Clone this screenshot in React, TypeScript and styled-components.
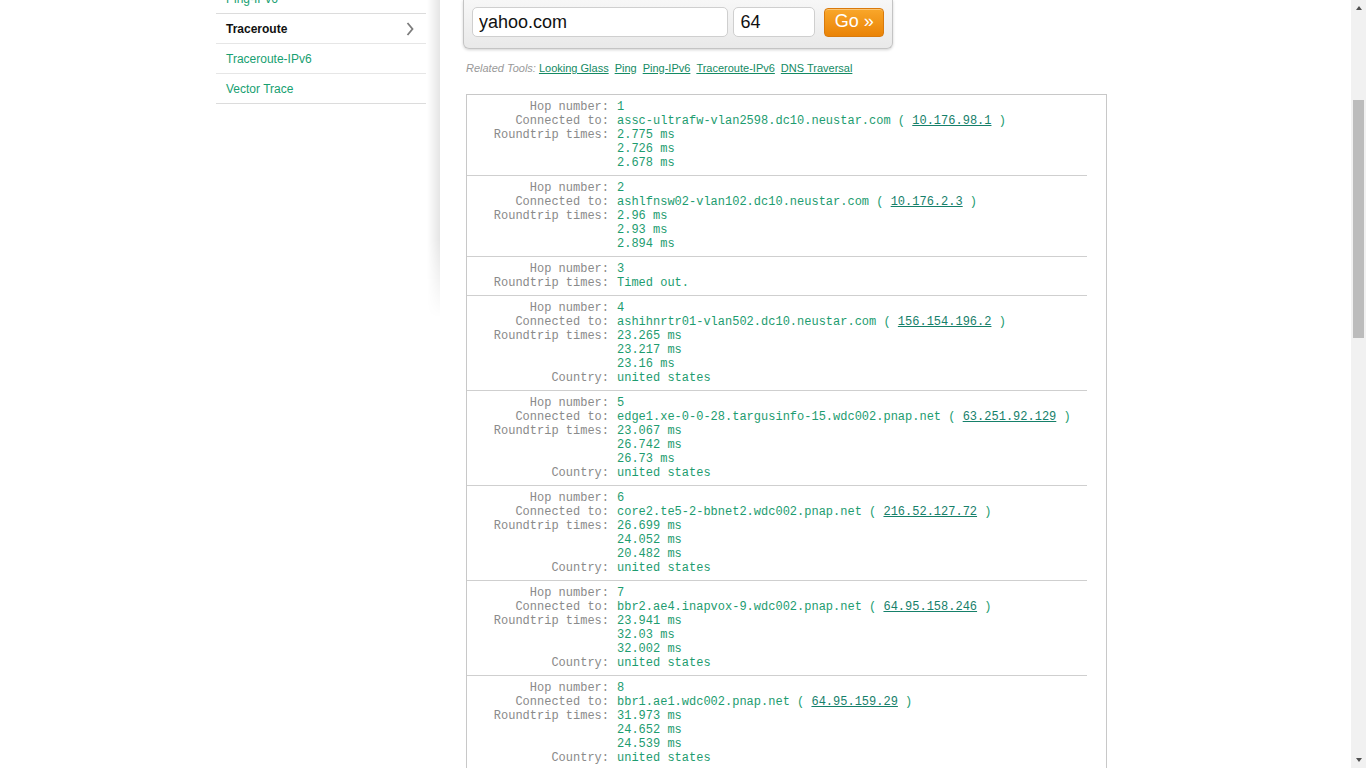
import { useLayoutEffect, useRef } from "react";
import styled, { createGlobalStyle } from "styled-components";

type Hop = {
  hop: number;
  host?: string;
  ip?: string;
  times: string[];
  country?: string;
};

const hops: Hop[] = [
  { hop: 1, host: "assc-ultrafw-vlan2598.dc10.neustar.com", ip: "10.176.98.1", times: ["2.775 ms", "2.726 ms", "2.678 ms"] },
  { hop: 2, host: "ashlfnsw02-vlan102.dc10.neustar.com", ip: "10.176.2.3", times: ["2.96 ms", "2.93 ms", "2.894 ms"] },
  { hop: 3, times: ["Timed out."] },
  { hop: 4, host: "ashihnrtr01-vlan502.dc10.neustar.com", ip: "156.154.196.2", times: ["23.265 ms", "23.217 ms", "23.16 ms"], country: "united states" },
  { hop: 5, host: "edge1.xe-0-0-28.targusinfo-15.wdc002.pnap.net", ip: "63.251.92.129", times: ["23.067 ms", "26.742 ms", "26.73 ms"], country: "united states" },
  { hop: 6, host: "core2.te5-2-bbnet2.wdc002.pnap.net", ip: "216.52.127.72", times: ["26.699 ms", "24.052 ms", "20.482 ms"], country: "united states" },
  { hop: 7, host: "bbr2.ae4.inapvox-9.wdc002.pnap.net", ip: "64.95.158.246", times: ["23.941 ms", "32.03 ms", "32.002 ms"], country: "united states" },
  { hop: 8, host: "bbr1.ae1.wdc002.pnap.net", ip: "64.95.159.29", times: ["31.973 ms", "24.652 ms", "24.539 ms"], country: "united states" },
];

const tools = ["Looking Glass", "Ping", "Ping-IPv6", "Traceroute", "Traceroute-IPv6", "Vector Trace"];
const related = ["Looking Glass", "Ping", "Ping-IPv6", "Traceroute-IPv6", "DNS Traversal"];

const App = () => {
  const scrollRef = useRef<HTMLDivElement>(null);

  useLayoutEffect(() => {
    if (scrollRef.current) scrollRef.current.scrollTop = 274;
  }, []);

  return (
    <>
      <GlobalStyle />
      <StWindow>
        <StScroller ref={scrollRef}>
          <StPage>
            <StHeader>
              <StBrand>UltraTools</StBrand>
              <StPageTitle>Traceroute</StPageTitle>
            </StHeader>
            <StBody>
              <StSide>
                <StMenu>
                  {tools.map((t) => (
                    <StMenuItem key={t} $active={t === "Traceroute"}>
                      {t}
                      {t === "Traceroute" && (
                        <svg width="8" height="14" viewBox="0 0 8 14">
                          <path d="M1.5 1 L6.5 7 L1.5 13" fill="none" stroke="#7c7c7c" strokeWidth="1.8" />
                        </svg>
                      )}
                    </StMenuItem>
                  ))}
                </StMenu>
              </StSide>
              <StMain>
                <StForm>
                  <StHostInput defaultValue="yahoo.com" />
                  <StHopInput defaultValue="64" />
                  <StGoBtn type="button">Go »</StGoBtn>
                </StForm>
                <StRelated>
                  <StRelatedLabel>Related Tools:</StRelatedLabel>
                  {related.map((r) => (
                    <StRelatedLink key={r} href="#">
                      {r}
                    </StRelatedLink>
                  ))}
                </StRelated>
                <StResults>
                  {hops.map((h) => (
                    <StHop key={h.hop}>
                      <StLabel>Hop number:</StLabel>
                      <StValue>{h.hop}</StValue>
                      {h.host && (
                        <>
                          <StLabel>Connected to:</StLabel>
                          <StValue>
                            {h.host} ( <StIpLink href="#">{h.ip}</StIpLink> )
                          </StValue>
                        </>
                      )}
                      <StLabel>Roundtrip times:</StLabel>
                      <StValue>
                        {h.times.map((t, i) => (
                          <div key={i}>{t}</div>
                        ))}
                      </StValue>
                      {h.country && (
                        <>
                          <StLabel>Country:</StLabel>
                          <StValue>{h.country}</StValue>
                        </>
                      )}
                    </StHop>
                  ))}
                </StResults>
              </StMain>
            </StBody>
          </StPage>
        </StScroller>
        <StScrollbar>
          <StArrow $dir="up" />
          <StTrack>
            <StThumb />
          </StTrack>
          <StArrow $dir="down" />
        </StScrollbar>
      </StWindow>
    </>
  );
};

export default App;

const GlobalStyle = createGlobalStyle`
  html, body {
    margin: 0;
    padding: 0;
    overflow: hidden;
    background: #fff;
    font-family: "Liberation Sans", Arial, sans-serif;
  }
`;

const StWindow = styled.div`
  display: flex;
  height: 100vh;
`;

const StScroller = styled.div`
  flex: 1;
  overflow-y: scroll;
  overflow-x: hidden;
  scrollbar-width: none;

  &::-webkit-scrollbar {
    display: none;
  }
`;

const StScrollbar = styled.div`
  display: flex;
  flex-direction: column;
  width: 15px;
  background: #f1f1f1;
`;

const StArrow = styled.div<{ $dir: "up" | "down" }>`
  display: flex;
  align-items: center;
  justify-content: center;
  height: 15px;

  &::before {
    content: "";
    width: 0;
    height: 0;
    border-left: 3.5px solid transparent;
    border-right: 3.5px solid transparent;
    ${({ $dir }) =>
      $dir === "up"
        ? "border-bottom: 4px solid #505050; margin-top: 1px;"
        : "border-top: 4px solid #505050; margin-bottom: 1px;"}
  }
`;

const StTrack = styled.div`
  flex: 1;
  padding: 85px 2px 0;
`;

const StThumb = styled.div`
  height: 238px;
  background: #bcbcbc;
`;

const StPage = styled.div`
  width: 919px;
  min-height: 2381px;
  margin: 0 auto;
`;

const StHeader = styled.header`
  height: 198px;
  box-sizing: border-box;
  padding: 40px 10px 0;
`;

const StBrand = styled.div`
  font-size: 28px;
  font-weight: bold;
  color: #1d9c6f;
`;

const StPageTitle = styled.h1`
  margin: 40px 0 0;
  font-size: 22px;
  font-weight: normal;
  color: #333;
`;

const StBody = styled.div`
  display: grid;
  grid-template-columns: 224px 1fr;
  column-gap: 23px;
  align-items: start;
`;

const StSide = styled.aside`
  position: relative;
  height: 394px;

  &::after {
    content: "";
    position: absolute;
    top: 0;
    right: 0;
    bottom: 0;
    width: 13px;
    background: linear-gradient(to right, rgba(0, 0, 0, 0), rgba(0, 0, 0, 0.1));
    -webkit-mask-image: linear-gradient(to bottom, #000 80%, transparent);
    mask-image: linear-gradient(to bottom, #000 80%, transparent);
  }
`;

const StMenu = styled.ul`
  width: 210px;
  margin: 0;
  padding: 0;
  list-style: none;
`;

const StMenuItem = styled.li<{ $active?: boolean }>`
  display: flex;
  align-items: center;
  justify-content: space-between;
  height: 29px;
  padding: 0 12px 0 10px;
  border-bottom: 1px solid #e6e6e6;
  box-shadow: ${({ $active }) => ($active ? "0 -1px 0 #dcdcdc" : "none")};

  font-size: 12px;
  font-weight: ${({ $active }) => ($active ? "bold" : "normal")};
  color: ${({ $active }) => ($active ? "#111" : "#17a071")};

  &:last-child {
    border-bottom-color: #dcdcdc;
  }
`;

const StMain = styled.main`
  padding-top: 76px;
`;

const StForm = styled.div`
  display: flex;
  align-items: center;
  width: 430px;
  box-sizing: border-box;
  padding: 7px 8px 11px;
  border: 1px solid #c4c4c4;
  border-top: none;
  border-radius: 0 0 6px 6px;
  background: linear-gradient(to bottom, #f7f7f7, #e9e9e9);
  box-shadow: 0 1px 3px rgba(0, 0, 0, 0.18);
`;

const StInput = styled.input`
  height: 30px;
  box-sizing: border-box;
  padding: 0 6px;
  border: 1px solid #cfcfcf;
  border-radius: 5px;
  background: #fff;
  outline: none;

  font-family: "Liberation Sans", Arial, sans-serif;
  font-size: 18px;
  color: #111;
`;

const StHostInput = styled(StInput)`
  width: 258px;
`;

const StHopInput = styled(StInput)`
  width: 82px;
  margin-left: 5px;
`;

const StGoBtn = styled.button`
  height: 29px;
  width: 60px;
  margin-left: 9px;
  padding: 0 0 2px;
  border: 1px solid #d97a0c;
  border-radius: 4px;
  background: linear-gradient(to bottom, #f9a72a, #ea8306);
  box-shadow: inset 0 1px 0 rgba(255, 255, 255, 0.35);

  font-family: "Liberation Sans", Arial, sans-serif;
  font-size: 18px;
  color: #fff;
`;

const StRelated = styled.div`
  display: flex;
  gap: 6px;
  margin: 13px 0 0 3px;
  font-size: 11px;
  line-height: 13px;
`;

const StRelatedLabel = styled.span`
  margin-right: -3px;
  font-style: italic;
  color: #999;
`;

const StRelatedLink = styled.a`
  color: #148a63;
  text-decoration: underline;
`;

const StResults = styled.div`
  width: 641px;
  box-sizing: border-box;
  margin: 19px 0 0 3px;
  padding-right: 19px;
  border: 1px solid #c8c8c8;
`;

const StHop = styled.div`
  display: grid;
  grid-template-columns: 142px 1fr;
  column-gap: 8px;
  padding: 5px 0 5px;
  border-bottom: 1px solid #cfcfcf;

  font-family: "Liberation Mono", "Courier New", monospace;
  font-size: 12px;
  line-height: 14px;

  &:last-child {
    border-bottom: none;
  }
`;

const StLabel = styled.div`
  text-align: right;
  color: #8a8a8a;
  white-space: pre;
`;

const StValue = styled.div`
  color: #1d9c6f;
  white-space: pre;
`;

const StIpLink = styled.a`
  color: #16806a;
  text-decoration: underline;
`;
